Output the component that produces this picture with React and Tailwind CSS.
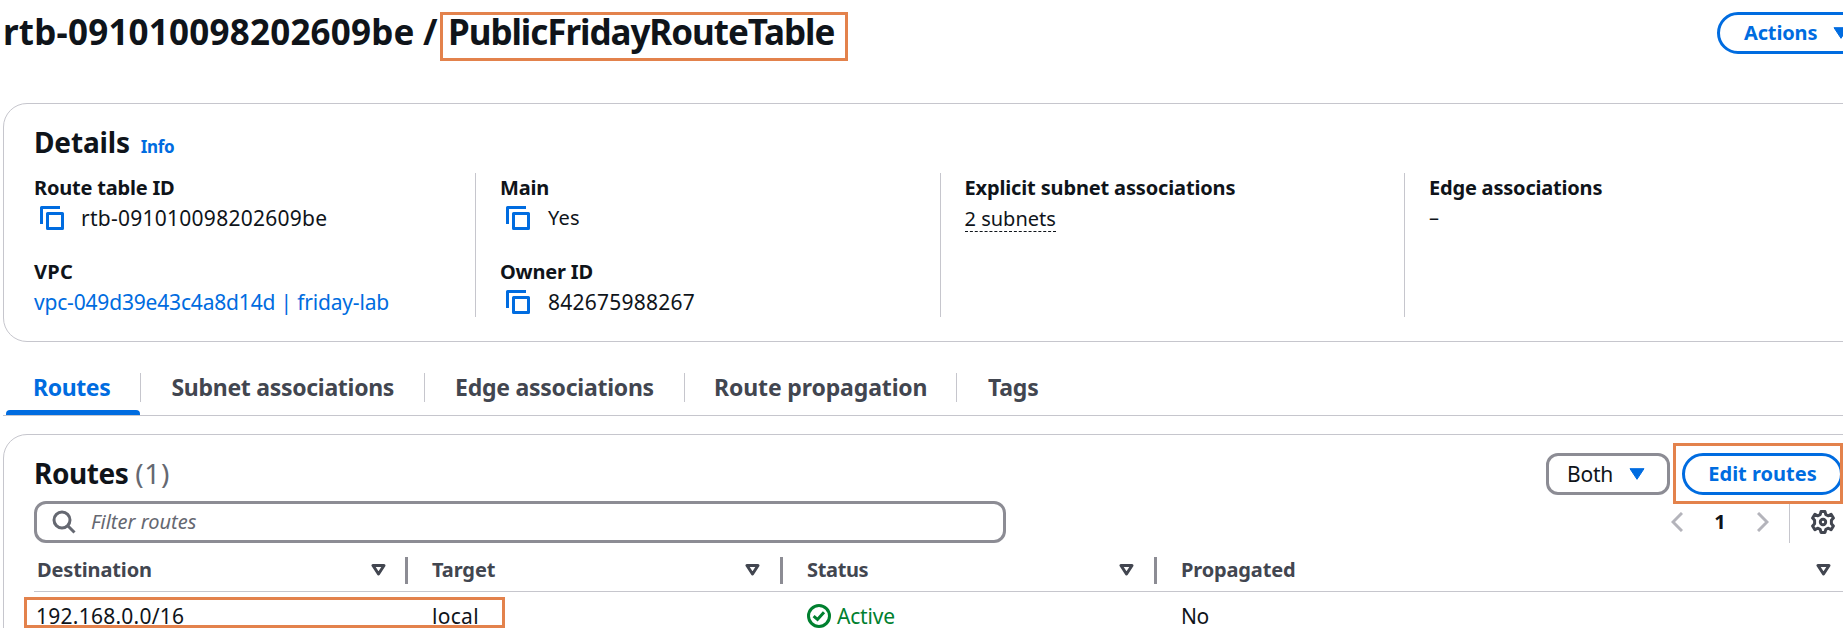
import React from "react";

function CopyIcon() {
  return (
    <svg viewBox="0 0 24 24" className="ml-[6px] h-6 w-6 shrink-0" fill="none" stroke="#006ce0" strokeWidth="3" strokeLinejoin="round">
      <path d="M20 1.5H1.5V18" />
      <path d="M7.500 7.500H22.500V22.500H7.500Z" />
    </svg>
  );
}

function Caret() {
  return (
    <svg viewBox="0 0 16 12" className="h-3 w-4 shrink-0" fill="#006ce0" stroke="#006ce0" strokeWidth="1" strokeLinejoin="round">
      <path d="M1 0.700H15L8 11.300Z" />
    </svg>
  );
}

function SortIcon() {
  return (
    <svg viewBox="0 0 15 12" className="h-3 w-[15px] shrink-0" fill="none" stroke="#424650" strokeWidth="3" strokeLinejoin="round">
      <path d="M2 1.500H13L7.500 10Z" />
    </svg>
  );
}

function SearchIcon() {
  return (
    <svg viewBox="0 0 24 24" className="h-6 w-6 shrink-0" fill="none" stroke="#656871" strokeWidth="3">
      <circle cx="10" cy="10" r="8" />
      <path d="M15.500 15.500L22.500 22.500" />
    </svg>
  );
}

function Chevron({ right }) {
  return (
    <svg viewBox="0 0 12 20" className="h-5 w-3 shrink-0" fill="none" stroke="#b4b4bb" strokeWidth="3">
      <path d={right ? "M1 1L10 10L1 19" : "M11 1L2 10L11 19"} />
    </svg>
  );
}

function GearIcon() {
  return (
    <svg viewBox="0 0 24 24" className="h-6 w-6 shrink-0" fill="none" stroke="#424650" strokeWidth="3" strokeLinejoin="round">
      <circle cx="12" cy="12" r="2.700" />
      <path d="M10 1.500h4l.8 3.200 2.600 1.100 2.700-1.600 2.300 3.900-2 2.200v3.400l2 2.200-2.300 3.900-2.700-1.600-2.600 1.100-.8 3.200h-4l-.8-3.200-2.600-1.100-2.700 1.600-2.300-3.900 2-2.200v-3.400l-2-2.200 2.300-3.900 2.700 1.600 2.600-1.100z" />
    </svg>
  );
}

function CheckIcon() {
  return (
    <svg viewBox="0 0 24 24" className="h-6 w-6 shrink-0" fill="none" stroke="#00802f" strokeWidth="3">
      <circle cx="12" cy="12" r="10.500" />
      <path d="M6.600 12.200L10.500 15.500L17 8.200" />
    </svg>
  );
}

function Field({ label, labelClass = "tracking-[-0.2px]", children }) {
  return (
    <div>
      <div className={`h-[30px] font-bold ${labelClass}`}>{label}</div>
      <div className="flex h-[30px] items-center">{children}</div>
    </div>
  );
}

const column = "flex h-36 w-[464.5px] shrink-0 flex-col gap-6 border-l border-[#c6c6cd] pl-6";
const tab = "h-[29px] leading-[29px]";
const head = "flex h-[27px] items-center justify-between pb-[2px]";

export default function App() {
  return (
    <div className="relative h-[628px] w-[1843px] overflow-hidden bg-white font-['Noto_Sans',sans-serif] text-[20px] leading-[30px] whitespace-nowrap text-[#0f141a]">
      <header className="flex h-[103px] items-start justify-between">
        <h1 className="flex pt-[10px] pl-[3px] text-[35px] leading-[44px] font-bold">
          <span className="w-[420px] tracking-[0.2px]">rtb-091010098202609be</span>
          <span className="w-[25px]">/</span>
          <span className="tracking-[-1.05px]">PublicFridayRouteTable</span>
        </h1>
        <button className="mt-3 -mr-[30px] flex h-[42px] w-[156px] items-center gap-4 rounded-full border-[3px] border-[#006ce0] pl-[24px] font-bold tracking-[-0.15px] text-[#006ce0]">
          Actions
          <Caret />
        </button>
      </header>

      <section className="ml-[3px] h-[239px] w-[1900px] rounded-[24px] border border-[#c6c6cd] pl-[30px]">
        <div className="flex items-baseline gap-[11px] pt-[20px]">
          <h2 className="text-[28px] leading-[36px] font-bold tracking-[-0.15px]">Details</h2>
          <a className="text-[17px] font-bold tracking-[-0.4px] text-[#006ce0]">Info</a>
        </div>
        <div className="mt-[11px] flex">
          <div className="flex h-36 w-[441px] shrink-0 flex-col gap-6">
            <Field label="Route table ID">
              <CopyIcon />
              <span className="ml-[17px] text-[21px] tracking-[0.26px]">rtb-091010098202609be</span>
            </Field>
            <Field label="VPC" labelClass="tracking-[0.3px]">
              <a className="text-[21px] tracking-[-0.18px] text-[#006ce0]">vpc-049d39e43c4a8d14d | friday-lab</a>
            </Field>
          </div>
          <div className={column}>
            <Field label="Main">
              <CopyIcon />
              <span className="ml-[18px] tracking-[0.2px]">Yes</span>
            </Field>
            <Field label="Owner ID">
              <CopyIcon />
              <span className="ml-[18px] text-[21px] tracking-[0.24px]">842675988267</span>
            </Field>
          </div>
          <div className={column}>
            <Field label="Explicit subnet associations" labelClass="tracking-[-0.15px]">
              <span className="h-[27px] border-b border-dashed border-[#0f141a] leading-[28px]">2 subnets</span>
            </Field>
          </div>
          <div className={column}>
            <Field label="Edge associations">–</Field>
          </div>
        </div>
      </section>

      <nav className="ml-[3px] flex h-[74px] w-[1900px] border-b border-[#c6c6cd] pt-[31px] text-[23px] font-bold text-[#424650]">
        <div className="ml-[3px] flex h-[42px] w-[134px] flex-col justify-between text-[#006ce0]">
          <span className="h-[29px] pl-[27px] leading-[29px] tracking-[-0.4px]">Routes</span>
          <span className="h-[5px] rounded-t-[4px] bg-[#006ce0]" />
        </div>
        <span className={`${tab} w-[284px] border-l border-[#c6c6cd] pl-[30.5px] tracking-[-0.3px]`}>Subnet associations</span>
        <span className={`${tab} w-[260px] border-l border-[#c6c6cd] pl-[30px] tracking-[-0.25px]`}>Edge associations</span>
        <span className={`${tab} w-[272px] border-l border-[#c6c6cd] pl-[29px] tracking-[-0.13px]`}>Route propagation</span>
        <span className={`${tab} border-l border-[#c6c6cd] pl-[31px] tracking-[-0.2px]`}>Tags</span>
      </nav>

      <section className="mt-[18px] ml-[3px] h-[260px] w-[1900px] rounded-t-[24px] border border-[#c6c6cd] pl-[30px]">
        <div className="flex h-[66px] w-[1809px] justify-between pt-[18px]">
          <h2 className="flex gap-[7px] pt-[2px] text-[28px] leading-[36px] font-bold tracking-[-0.45px]">
            Routes
            <span className="font-normal tracking-[0.6px] text-[#656871]">(1)</span>
          </h2>
          <div className="flex gap-3">
            <button className="flex h-[42px] w-[124px] items-center gap-[16px] rounded-[12px] border-[3px] border-[#8c8c94] pl-[18px] text-[21px] tracking-[-0.2px]">
              Both
              <Caret />
            </button>
            <button className="h-[42px] w-[161px] rounded-full border-[3px] border-[#006ce0] leading-[36px] font-bold text-[#006ce0]">
              Edit routes
            </button>
          </div>
        </div>
        <div className="flex h-[42px] w-[1809px] justify-between">
          <div className="flex w-[972px] items-center gap-[15px] rounded-[12px] border-[3px] border-[#8c8c94] pl-[15px] text-[#656871] italic">
            <SearchIcon />
            Filter routes
          </div>
          <div className="flex items-center pr-2">
            <Chevron />
            <span className="mx-[31px] w-[12px] text-center font-bold">1</span>
            <Chevron right />
            <span className="mr-[21px] ml-[20px] h-[42px] w-px bg-[#c6c6cd]" />
            <GearIcon />
          </div>
        </div>
        <div className="grid h-[49px] w-[1809px] grid-cols-[374px_375px_374px_686px] border-b border-[#c6c6cd] pt-[14px] font-bold text-[#424650]">
          <div className={`${head} border-r-[3px] border-[#8c8c94] pr-[19px] pl-[3px] tracking-[-0.14px]`}>Destination<SortIcon /></div>
          <div className={`${head} border-r-[3px] border-[#8c8c94] pr-[20px] pl-[24px] tracking-[-0.1px]`}>Target<SortIcon /></div>
          <div className={`${head} border-r-[3px] border-[#8c8c94] pr-[20px] pl-[24px] tracking-[-0.35px]`}>Status<SortIcon /></div>
          <div className={`${head} pr-[12px] pl-[24px] tracking-[-0.15px]`}>Propagated<SortIcon /></div>
        </div>
        <div className="grid w-[1809px] grid-cols-[374px_375px_374px_686px] pt-[12px] text-[21px] leading-[24px]">
          <div className="pl-[2px] tracking-[0.25px]">192.168.0.0/16</div>
          <div className="pl-[24px] tracking-[0.3px]">local</div>
          <div className="flex items-center gap-[6px] pl-[24px] tracking-[-0.2px] text-[#00802f]"><CheckIcon />Active</div>
          <div className="pl-[24px] tracking-[-0.5px]">No</div>
        </div>
      </section>

      <div className="absolute top-[12px] left-[440px] h-[49px] w-[408px] border-[3px] border-[#e3824c]" />
      <div className="absolute top-[443px] left-[1673px] h-[61px] w-[170px] border-[3px] border-[#e3824c]" />
      <div className="absolute top-[597px] left-[24px] h-[31px] w-[481px] border-[3px] border-[#e3824c]" />
    </div>
  );
}
